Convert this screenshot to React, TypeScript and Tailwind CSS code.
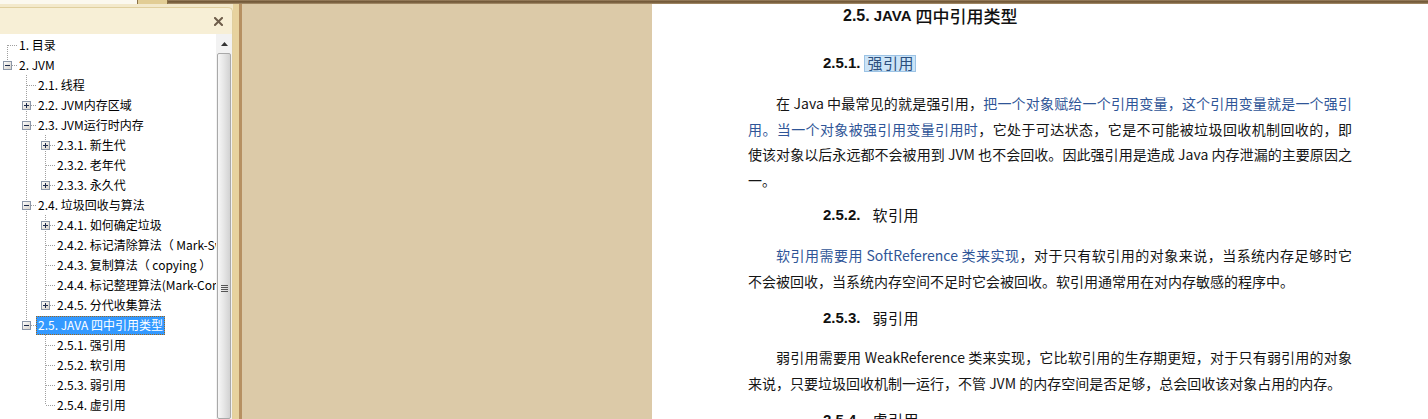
import React from "react";

type Item = {
  label: string;
  level: number;
  exp?: "plus" | "minus";
  last?: boolean;
  first?: boolean;
  selected?: boolean;
  guides: boolean[];
};

const items: Item[] = [
  { label: "1. 目录", level: 0, first: true, guides: [] },
  { label: "2. JVM", level: 0, exp: "minus", last: true, guides: [] },
  { label: "2.1. 线程", level: 1, guides: [false] },
  { label: "2.2. JVM内存区域", level: 1, exp: "plus", guides: [false] },
  { label: "2.3. JVM运行时内存", level: 1, exp: "minus", guides: [false] },
  { label: "2.3.1. 新生代", level: 2, exp: "plus", guides: [false, true] },
  { label: "2.3.2. 老年代", level: 2, guides: [false, true] },
  { label: "2.3.3. 永久代", level: 2, exp: "plus", last: true, guides: [false, true] },
  { label: "2.4. 垃圾回收与算法", level: 1, exp: "minus", guides: [false] },
  { label: "2.4.1. 如何确定垃圾", level: 2, exp: "plus", guides: [false, true] },
  { label: "2.4.2. 标记清除算法（ Mark-Sweep ）", level: 2, guides: [false, true] },
  { label: "2.4.3. 复制算法（ copying ）", level: 2, guides: [false, true] },
  { label: "2.4.4. 标记整理算法(Mark-Compact)", level: 2, guides: [false, true] },
  { label: "2.4.5. 分代收集算法", level: 2, exp: "plus", last: true, guides: [false, true] },
  { label: "2.5. JAVA 四中引用类型", level: 1, exp: "minus", last: true, selected: true, guides: [false] },
  { label: "2.5.1. 强引用", level: 2, guides: [false, false] },
  { label: "2.5.2. 软引用", level: 2, guides: [false, false] },
  { label: "2.5.3. 弱引用", level: 2, guides: [false, false] },
  { label: "2.5.4. 虚引用", level: 2, last: true, guides: [false, false] },
];

function Connector({ it }: { it: Item }) {
  const w = (it.level + 1) * 19 - 2;
  const ox = it.level * 19;
  return (
    <svg width={w} height={20} className="block shrink-0" shapeRendering="crispEdges">
      <defs>
        <linearGradient id="exbox" x1="0" y1="0" x2="1" y2="1">
          <stop offset="0" stopColor="#ffffff" />
          <stop offset="1" stopColor="#d4d0c8" />
        </linearGradient>
      </defs>
      {it.guides.map((g, i) =>
        g ? (
          <line key={i} x1={i * 19 + 7.5} y1={0} x2={i * 19 + 7.5} y2={20} stroke="#a0a0a0" strokeDasharray="1 1" />
        ) : null
      )}
      <line
        x1={ox + 7.5}
        y1={it.first ? 10 : 0}
        x2={ox + 7.5}
        y2={it.last ? 10 : 20}
        stroke="#a0a0a0"
        strokeDasharray="1 1"
      />
      <line x1={ox + 8} y1={10.5} x2={ox + 18} y2={10.5} stroke="#a0a0a0" strokeDasharray="1 1" />
      {it.exp && (
        <g>
          <rect x={ox + 3.5} y={6.5} width={8} height={8} fill="url(#exbox)" stroke="#8c97a8" />
          <rect x={ox + 5} y={10} width={5} height={1} fill="#1c2a4a" />
          {it.exp === "plus" && <rect x={ox + 7} y={8} width={1} height={5} fill="#1c2a4a" />}
        </g>
      )}
    </svg>
  );
}

function TreeRow({ it }: { it: Item }) {
  return (
    <div className="flex h-[20px] items-start whitespace-nowrap">
      <Connector it={it} />
      <span
        className={
          "mt-[1px] inline-block h-[19px] border px-[1px] text-[12px] leading-[16px] " +
          (it.selected
            ? "border-dotted border-[#a0661a] bg-[#3399ff] text-white"
            : "border-transparent text-black")
        }
      >
        {it.label}
      </span>
    </div>
  );
}

const blue = "text-[#2f5597]";

function Line({ children, justify, indent }: { children: React.ReactNode; justify?: boolean; indent?: boolean }) {
  return (
    <div
      className={
        "h-[25.5px] whitespace-nowrap leading-[25.5px] " +
        (justify ? "text-justify [text-align-last:justify] " : "") +
        (indent ? "pl-[28px]" : "")
      }
    >
      {children}
    </div>
  );
}

function Heading({ num, text, className }: { num: string; text: string; className?: string }) {
  return (
    <div className={"flex h-[26px] items-center pl-[75px] " + (className ?? "")}>
      <span className="font-['Liberation_Sans',sans-serif] text-[15px] font-bold text-[#111]">{num}</span>
      <span className="ml-[12px] text-[15px] tracking-[0.5px] text-[#111]">{text}</span>
    </div>
  );
}

export default function App() {
  return (
    <div className="flex h-[419px] w-[1428px] flex-col overflow-hidden font-['Noto_Sans_CJK_SC',sans-serif]">
      {/* top strip */}
      <div className="flex h-[4px] shrink-0">
        <div className="w-[137px] bg-[#fbf8ef]" />
        <div className="w-[31px] border-x border-[#8a7045] bg-[#e2cd95]" />
        <div className="flex-1 bg-[linear-gradient(to_bottom,#a08664,#6b5232_45%,#8a704e_75%,#b09874)]" />
      </div>

      <div className="flex min-h-0 flex-1">
        {/* left outline panel */}
        <div className="flex w-[233px] shrink-0 flex-col bg-[#f3e9cc] pt-[3px]">
          <div className="flex min-h-0 flex-1 flex-col overflow-hidden rounded-tr-[5px] border-r border-t border-[#e0cf9f] bg-[#f7efd6]">
            <div className="flex h-[26px] shrink-0 items-center justify-end pr-[9px]">
              <svg width="9" height="9" viewBox="0 0 9 9" className="block">
                <path d="M1 1 L8 8 M8 1 L1 8" stroke="#6e5d4a" strokeWidth="2" strokeLinecap="square" />
              </svg>
            </div>
            <div className="flex min-h-0 flex-1">
              <div className="min-w-0 flex-1 overflow-hidden bg-white pt-[1px]">
                {items.map((it, i) => (
                  <TreeRow key={i} it={it} />
                ))}
              </div>
              {/* scrollbar */}
              <div className="flex w-[16px] shrink-0 flex-col bg-[#f2f2f2] px-[1px]">
                <div className="flex h-[19px] shrink-0 items-center justify-center">
                  <svg width="7" height="4" viewBox="0 0 7 4" className="block">
                    <path d="M3.5 0 L7 4 L0 4 Z" fill="#333" />
                  </svg>
                </div>
                <div className="flex flex-1 flex-col items-center rounded-[2px] border border-[#a9a9a9] bg-[linear-gradient(to_right,#f7f7f7,#e6e6e6_50%,#d2d2d2)] pt-[231px]">
                  <div className="flex flex-col gap-[1px]">
                    <div className="h-[1px] w-[7px] bg-[#555]" />
                    <div className="h-[1px] w-[7px] bg-[#555]" />
                    <div className="h-[1px] w-[7px] bg-[#555]" />
                    <div className="h-[1px] w-[7px] bg-[#555]" />
                  </div>
                </div>
              </div>
            </div>
          </div>
        </div>

        {/* frame strips */}
        <div className="w-[6px] shrink-0 bg-[#e7d29e]" />
        <div className="w-[3px] shrink-0 bg-[#b69062]" />

        {/* desk background */}
        <div className="w-[410px] shrink-0 bg-[#dccaa8]" />

        {/* page */}
        <div className="min-w-0 flex-1 overflow-hidden bg-white pl-[96px]">
          <div className="w-[604px] text-[14px] text-[#151515]">
            <div className="flex h-[24px] items-center pl-[95px]">
              <span className="font-['Liberation_Sans',sans-serif] text-[16px] font-bold text-[#111]">2.5.</span>
              <span className="ml-[4px] font-['Liberation_Sans',sans-serif] text-[15px] font-bold text-[#111]">JAVA</span>
              <span className="ml-[4px] text-[17px] font-medium text-[#111]">四中引用类型</span>
            </div>

            <div className="mt-[22px] flex h-[26px] items-center pl-[75px]">
              <span className="font-['Liberation_Sans',sans-serif] text-[15px] font-bold text-[#111]">2.5.1.</span>
              <span className="ml-[3px] flex h-[17px] items-center border border-[#9cc3e5] bg-[#cce4f7] pl-[3px] pr-[1px] text-[15px] tracking-[0.5px] text-[#2b4f7e]">
                强引用
              </span>
            </div>

            <div className="mt-[15px]">
              <Line justify indent>
                在 Java 中最常见的就是强引用，<span className={blue}>把一个对象赋给一个引用变量，这个引用变量就是一个强引</span>
              </Line>
              <Line justify>
                <span className={blue}>用。当一个对象被强引用变量引用时</span>，它处于可达状态，它是不可能被垃圾回收机制回收的，即
              </Line>
              <Line justify>使该对象以后永远都不会被用到 JVM 也不会回收。因此强引用是造成 Java 内存泄漏的主要原因之</Line>
              <Line>一。</Line>
            </div>

            <Heading num="2.5.2." text="软引用" className="mt-[9px]" />

            <div className="mt-[15px]">
              <Line justify indent>
                <span className={blue}>软引用需要用 SoftReference 类来实现</span>，对于只有软引用的对象来说，当系统内存足够时它
              </Line>
              <Line>不会被回收，当系统内存空间不足时它会被回收。软引用通常用在对内存敏感的程序中。</Line>
            </div>

            <Heading num="2.5.3." text="弱引用" className="mt-[11px]" />

            <div className="mt-[14px]">
              <Line justify indent>
                弱引用需要用 WeakReference 类来实现，它比软引用的生存期更短，对于只有弱引用的对象
              </Line>
              <Line>来说，只要垃圾回收机制一运行，不管 JVM 的内存空间是否足够，总会回收该对象占用的内存。</Line>
            </div>

            <Heading num="2.5.4." text="虚引用" className="mt-[11px]" />
          </div>
        </div>
      </div>
    </div>
  );
}
